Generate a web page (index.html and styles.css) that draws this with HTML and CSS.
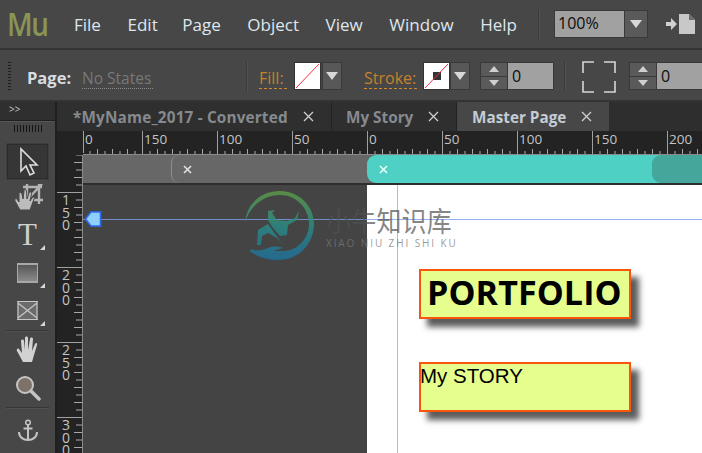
FILE: index.html
```html
<!DOCTYPE html>
<html lang="en">
<head>
<meta charset="utf-8">
<title>Muse</title>
<link rel="stylesheet" href="styles.css">
</head>
<body>
<div class="app">
  <header class="menubar">
    <div class="logo">Mu</div>
    <nav class="menu"><span>File</span><span>Edit</span><span class="menu-page">Page</span><span>Object</span><span>View</span><span>Window</span><span>Help</span></nav>
    <div class="vsep menu-sep"></div>
    <div class="zoom-combo"><div class="zoom-value">100%</div><div class="arrow-btn"><i class="tri"></i></div></div>
    <svg class="publish" width="30" height="20" viewBox="0 0 30 20"><path d="M0 8h5V4l6 6-6 6v-4H0z" fill="#d0d0d0"/><path d="M13 0h10l6 6v14H13z" fill="#c8c8c8"/><path d="M23 0v6h6z" fill="#6c6c6c"/></svg>
  </header>

  <section class="controlbar">
    <div class="grip"></div>
    <strong class="page-label">Page:</strong>
    <span class="states">No States</span>
    <div class="vsep ctl-sep1"></div>
    <span class="link fill-label">Fill:</span>
    <div class="swatch sw1"><svg width="25" height="26" viewBox="0 0 25 26"><path d="M1 25L24 1" stroke="#f0303a" stroke-width="1"/></svg></div>
    <div class="arrow-btn small ab1"><i class="tri"></i></div>
    <span class="link stroke-label">Stroke:</span>
    <div class="swatch sw2"><svg width="25" height="26" viewBox="0 0 25 26"><rect x="9" y="9" width="8" height="8" fill="#333"/><path d="M1 25L24 1" stroke="#f0303a" stroke-width="1"/></svg></div>
    <div class="arrow-btn small"><i class="tri"></i></div>
    <div class="spinner sp1"><div class="spin-btns"><div class="spin-up"><i class="tri-up"></i></div><div class="spin-down"><i class="tri-down"></i></div></div><div class="spin-val">0</div></div>
    <div class="vsep ctl-sep2"></div>
    <svg class="corners" width="36" height="34" viewBox="0 0 36 34"><path d="M13 2H2v11M23 2h11v11M2 21v11h11M34 21v11H23" fill="none" stroke="#d6d6d6" stroke-width="1.600"/></svg>
    <div class="spinner sp2"><div class="spin-btns"><div class="spin-up"><i class="tri-up"></i></div><div class="spin-down"><i class="tri-down"></i></div></div><div class="spin-val">0</div></div>
  </section>

  <main class="main">
    <aside class="left">
      <div class="collapse">&gt;&gt;</div>
      <div class="tools">
        <div class="tool-grip"></div>
        <div class="tool active"><svg width="24" height="30" viewBox="0 0 24 30"><path d="M5 2v22l5-5 4 9 4-2-4-8h7z" fill="none" stroke="#dedede" stroke-width="1.600"/></svg></div>
        <div class="tool crop"><svg width="30" height="28" viewBox="0 0 30 28"><path d="M10 3h19M14 0v16M12 16h18M26 0v20M29 0L13 17" fill="none" stroke="#b4b4b4" stroke-width="2.400"/><path d="M7 26L2 17C1 15 3 14 4 15L6 18 6 10C6 8 8 8 9 10L10 15 11 7C11 5 13 5 13.500 7L14 15 16 9C17 7 19 8 18.500 10L17 17 19 14C20 12 22 13 21 15L17 26Z" fill="#bcbcbc" stroke="#474747" stroke-width="1"/></svg></div>
        <div class="tool t-tool">T<i class="corner-mark"></i></div>
        <div class="tool"><div class="rect-icon"></div><i class="corner-mark"></i></div>
        <div class="tool"><svg width="22" height="20" viewBox="0 0 22 20"><rect x="0.500" y="1" width="20" height="17" fill="#6b6b6b"/><path d="M0 0.500h21M0 18.500h21M1 1v17M20 1v17M1 2l19 15M20 2L1 17" stroke="#c6c6c6" stroke-width="1.200" fill="none"/></svg><i class="corner-mark"></i></div>
        <div class="tool-rule r1"></div>
        <div class="tool"><svg width="26" height="28" viewBox="0 0 26 28"><path d="M8 26l-6-11c-1-2 1-3 2-2l3 4-1-12c0-2 3-2 3 0l1 9 0-12c0-2 3-2 3 0l0 12 2-11c0-2 3-2 3 0l-1 12 3-7c1-2 3-1 2 1l-3 10-2 7z" fill="#d2d2d2"/></svg></div>
        <div class="tool"><svg width="26" height="26" viewBox="0 0 26 26"><circle cx="10" cy="10" r="8" fill="#7d7268" stroke="#c4c4c4" stroke-width="2"/><path d="M16 16l8 8" stroke="#c4c4c4" stroke-width="3.500" stroke-linecap="round"/></svg></div>
        <div class="tool-rule r2"></div>
        <div class="tool"><svg width="22" height="24" viewBox="0 0 22 24"><circle cx="11" cy="3.500" r="2.300" fill="none" stroke="#c4c4c4" stroke-width="1.500"/><path d="M11 6v16M6.500 9.500h9M2 13c0 5 4 8 9 8s9-3 9-8" fill="none" stroke="#c4c4c4" stroke-width="2"/></svg></div>
      </div>
    </aside>

    <div class="doc">
      <div class="tabs">
        <div class="tab t1">*MyName_2017 - Converted<svg class="x" width="11" height="11" viewBox="0 0 11 11"><path d="M1 1l9 9M10 1l-9 9" stroke="#cfcfcf" stroke-width="1.300"/></svg></div>
        <div class="tab t2">My Story<svg class="x" width="11" height="11" viewBox="0 0 11 11"><path d="M1 1l9 9M10 1l-9 9" stroke="#cfcfcf" stroke-width="1.300"/></svg></div>
        <div class="tab t3">Master Page<svg class="x" width="11" height="11" viewBox="0 0 11 11"><path d="M1 1l9 9M10 1l-9 9" stroke="#cfcfcf" stroke-width="1.300"/></svg></div>
      </div>
      <div class="workspace">
        <div class="corner-cell"></div>
        <div class="hruler">
          <span class="mark first">0</span><span class="mark">150</span><span class="mark">100</span><span class="mark">50</span><span class="mark">0</span><span class="mark">50</span><span class="mark">100</span><span class="mark">150</span><span class="mark">200</span>
        </div>
        <div class="vruler">
          <div class="vmark lead"></div>
          <div class="vmark"><span>1</span><span>5</span><span>0</span></div>
          <div class="vmark"><span>2</span><span>0</span><span>0</span></div>
          <div class="vmark"><span>2</span><span>5</span><span>0</span></div>
          <div class="vmark"><span>3</span><span>0</span><span>0</span></div>
        </div>
        <div class="canvas">
          <div class="band">
            <div class="band-grey"><div class="band-notch"><svg class="bx" width="9" height="9" viewBox="0 0 9 9"><path d="M1 1l7 7M8 1L1 8" stroke="#e0e0e0" stroke-width="1.700"/></svg></div></div>
            <div class="band-teal"><svg class="bx" width="9" height="9" viewBox="0 0 9 9"><path d="M1 1l7 7M8 1L1 8" stroke="#e8fbf8" stroke-width="1.700"/></svg><div class="band-dark"></div></div>
          </div>
          <div class="stage">
            <div class="page"></div>
            <div class="guide-v"></div>
            <div class="guide-h"></div>
            <svg class="marker" width="18" height="18" viewBox="0 0 18 18"><path d="M1.500 9L7 2h9.500v14H7z" fill="#8fd0fb" stroke="#2f6bf0" stroke-width="1.600"/></svg>
            <div class="box box-a"><span class="portfolio">PORTFOLIO</span></div>
            <div class="box box-b"><span class="story">My STORY</span></div>
            <svg class="wm-logo" width="74" height="72" viewBox="0 0 74 72">
              <defs><linearGradient id="wg" gradientUnits="userSpaceOnUse" x1="0" y1="0" x2="0" y2="70"><stop offset="0" stop-color="#5c9a45"/><stop offset="0.500" stop-color="#2a8a86"/><stop offset="1" stop-color="#1f6f9c"/></linearGradient></defs>
              <path d="M2 32C3 13 18 0 37 0C56 0 71 15 71 33C71 53 55 69 36 69C25 69 14 66 7 60C6 59 8 58 10 59C15 60 20 59 25 57C30 55 36 55 40 57L30 60L40 60C54 60 66 48 66 33C66 17 53 4 37 4C20 4 6 16 2 32Z" fill="url(#wg)"/>
              <path d="M25 20L32 19L29 22L34 29L44 30L52 27L56 20L54 29L45 34L44 44L37 45L30 37L25 29Z" fill="url(#wg)"/>
              <path d="M14 54L15 39L25 33L30 40L35 47L39 52L34 47L25 42L19 45L18 54Z" fill="url(#wg)"/>
            </svg>
            <div class="wm-text"><div class="wm-cn">小牛知识库</div><div class="wm-en">XIAO NIU ZHI SHI KU</div></div>
          </div>
        </div>
      </div>
    </div>
  </main>
</div>
</body>
</html>
```
FILE: styles.css
```css
* { box-sizing: border-box; }
html, body { margin: 0; padding: 0; }
body { width: 702px; height: 453px; overflow: hidden; background: #474747; font-family: "Open Sans", "Noto Sans", sans-serif; }
.app { width: 702px; height: 453px; display: flex; flex-direction: column; overflow: hidden; }

.menubar { height: 48px; flex: none; display: flex; align-items: center; background: #474747; }
.logo { width: 74px; flex: none; padding-left: 7px; font-size: 32px; font-weight: 600; line-height: 44px; letter-spacing: -1.500px; color: #8a9454; transform: scaleX(0.87); transform-origin: 7px 0; }
.menu { width: 443px; flex: none; display: flex; justify-content: space-between; font-size: 17px; color: #dfe6ee; }
.menu-page { margin-left: -2px; }
.vsep { width: 2px; background: #393939; flex: none; border-right: 1px solid #525252; }
.menu-sep { height: 29px; margin-left: 21px; }
.zoom-combo { margin-left: 14px; width: 94px; height: 28px; padding: 1px; background: #393939; display: flex; gap: 1px; flex: none; }
.zoom-value { width: 69px; background: #a1a1a1; color: #0e0e0e; font-size: 16px; line-height: 25px; padding-left: 3px; }
.arrow-btn { width: 22px; background: #5a5a5a; display: flex; align-items: center; justify-content: center; flex: none; }
.tri { display: block; width: 0; height: 0; border-left: 6px solid transparent; border-right: 6px solid transparent; border-top: 8px solid #d8d8d8; }
.tri-up { display: block; width: 0; height: 0; border-left: 5px solid transparent; border-right: 5px solid transparent; border-bottom: 6px solid #cfcfcf; }
.tri-down { display: block; width: 0; height: 0; border-left: 5px solid transparent; border-right: 5px solid transparent; border-top: 6px solid #cfcfcf; }
.publish { margin-left: 18px; flex: none; margin-top: -1px; }

.controlbar { height: 54px; flex: none; display: flex; align-items: flex-start; border-top: 2px solid #353535; border-bottom: 2px solid #333; background: #474747; padding-top: 12px; overflow: hidden; }
.grip { width: 3px; flex: none; height: 30px; margin: 0 0 0 8px; background: repeating-linear-gradient(to bottom, #1e1e1e 0 1px, transparent 1px 3px); }
.page-label { flex: none; width: 55px; margin-left: 16px; font-size: 16.500px; line-height: 20px; margin-top: 6px; color: #d8dde2; }
.states { flex: none; width: 71px; font-size: 15.500px; line-height: 20px; margin-top: 6px; color: #787878; border-bottom: 1px dotted #8a8a8a; white-space: nowrap; }
.ctl-sep1 { height: 29px; margin-left: 93px; }
.link { flex: none; font-size: 16px; line-height: 20px; margin-top: 6px; color: #c6812c; border-bottom: 1px dashed #d68a28; white-space: nowrap; }
.fill-label { margin-left: 11px; width: 28px; }
.swatch { width: 27px; height: 28px; background: #fff; border: 1px solid #333; flex: none; }
.sw1 { margin-left: 7px; }
.sw2 { margin-left: 6px; }
.swatch svg { display: block; }
.arrow-btn.small { width: 20px; height: 28px; background: #585858; border: 1px solid #3a3a3a; }
.ab1 { margin-left: 1px; }
.stroke-label { margin-left: 22px; width: 53px; }
.spinner { display: flex; height: 28px; border: 1px solid #393939; flex: none; }
.sp1 { margin-left: 10px; width: 74px; }
.sp2 { margin-left: 12px; width: 80px; }
.spin-btns { width: 27px; flex: none; display: flex; flex-direction: column; background: #5a5a5a; border-right: 1px solid #393939; }
.spin-up, .spin-down { flex: 1; display: flex; align-items: center; justify-content: center; }
.spin-up { border-bottom: 1px solid #393939; }
.spin-val { flex: 1; background: #a1a1a1; color: #0e0e0e; font-size: 16px; line-height: 26px; padding-left: 4px; }
.ctl-sep2 { height: 29px; margin-left: 10px; }
.corners { margin: -2px 0 0 15px; flex: none; }

.main { flex: 1; display: flex; min-height: 0; }
.left { width: 57px; flex: none; background: #1f1f1f; display: flex; flex-direction: column; padding-right: 2px; }
.collapse { height: 18px; background: #2f2f2f; color: #c8c8c8; font-size: 10px; line-height: 15px; padding-left: 9px; flex: none; }
.tools { flex: 1; margin-top: 1px; background: #474747; border-top: 1px solid #565656; padding-top: 3px; display: flex; flex-direction: column; align-items: center; }
.tool-grip { width: 28px; height: 7px; flex: none; background: repeating-linear-gradient(to right, #151515 0 1px, transparent 1px 3px); margin-bottom: 12px; }
.tool { position: relative; width: 38px; flex: none; height: 38px; display: flex; align-items: center; justify-content: center; }
.tool svg { display: block; }
.tool.active { width: 41px; height: 35px; background: #363636; border: 1px solid #2c2c2c; outline: 1px solid #3e3e3e; }
.tool.crop { height: 37px; }
.t-tool { font-family: "Liberation Serif", serif; font-size: 31px; color: #cfcfcf; line-height: 38px; }
.rect-icon { width: 21px; height: 20px; background: linear-gradient(#565656, #8a8a8a); border: 1px solid #a8a8a8; border-width: 2px 1px; }
.corner-mark { position: absolute; right: 2px; bottom: 4px; width: 0; height: 0; border-left: 5px solid transparent; border-bottom: 5px solid #d8d8d8; }
.tool-rule { width: 43px; height: 2px; background: #363636; flex: none; border-bottom: 1px solid #505050; }
.r1 { margin-bottom: -1px; }
.r2 { margin-bottom: 3px; }

.doc { flex: 1; display: flex; flex-direction: column; min-width: 0; background: #232323; }
.tabs { height: 29px; flex: none; display: flex; background: #2e2e2e; padding-left: 1px; }
.tab { display: flex; align-items: center; font-weight: 700; font-size: 15.300px; color: #868a8e; background: #2f2f2f; border-right: 1px solid #222; position: relative; white-space: nowrap; }
.t1 { width: 274px; padding-left: 15px; letter-spacing: 0.170px; }
.t2 { width: 125px; padding-left: 14px; }
.t3 { width: 152px; padding-left: 15px; background: #474747; color: #c4ccd4; border-right: 0; }
.tab .x { position: absolute; top: 9px; }
.t1 .x { left: 245px; }
.t2 .x { left: 96px; }
.t3 .x { left: 124px; }

.workspace { flex: 1; display: grid; grid-template-columns: 26px 1fr; grid-template-rows: 24px 1fr; min-height: 0; background: #232323; }
.corner-cell { background: #232323; }
.hruler { display: flex; overflow: hidden; background-color: #232323; border-bottom: 1px solid #8a8a8a;
  background-image: linear-gradient(to right, #a8a8a8 1px, transparent 1px), linear-gradient(to right, #a8a8a8 1px, transparent 1px);
  background-size: 15px 5px, 15px 3px; background-position: 59px bottom, 66.500px bottom; background-repeat: repeat-x; }
.mark { flex: none; width: 75px; height: 22px; border-left: 1px solid #a0a0a0; padding-left: 1px; font-size: 13.500px; line-height: 16px; color: #c4c4c4; }
.mark.first { width: 59px; }
.vruler { display: flex; flex-direction: column; overflow: hidden; background-color: #232323; border-right: 1px solid #8a8a8a;
  background-image: linear-gradient(#a8a8a8 1px, transparent 1px), linear-gradient(#a8a8a8 1px, transparent 1px);
  background-size: 8px 15px, 6px 15px; background-position: right 7px, right 14.500px; background-repeat: repeat-y; }
.vmark { flex: none; height: 75px; border-top: 1px solid #a0a0a0; display: flex; flex-direction: column; padding-left: 5px; font-size: 14px; line-height: 12.500px; color: #c4c4c4; padding-top: 1px; }
.vmark.lead { height: 37px; border-top: 0; }
.canvas { display: flex; flex-direction: column; min-width: 0; min-height: 0; }
.band { height: 30px; flex: none; display: flex; background: #676767; border-bottom: 2px solid #2e2e2e; }
.band-grey { width: 284px; flex: none; padding-left: 88px; }
.band-notch { width: 40px; height: 28px; border-left: 1px solid #8e8e8e; border-radius: 8px 0 0 8px; padding-left: 11px; display: flex; align-items: center; }
.bx { display: block; flex: none; }
.band-teal { flex: 1; display: flex; align-items: center; justify-content: space-between; background: #4fd0c5; border-radius: 9px 0 0 9px; padding-left: 12px; }
.band-dark { width: 50px; height: 28px; background: #45a69b; border-radius: 9px 0 0 9px; }
.stage { flex: 1; position: relative; background: #444444; overflow: hidden; }
.page { position: absolute; left: 284px; top: 0; right: 0; bottom: 0; background: #fff; }
.guide-v { position: absolute; left: 314px; top: 0; bottom: 0; width: 1px; background: #9fc0ee; }
.guide-h { position: absolute; left: 0; right: 0; top: 34px; height: 1px; background: #7b9de8; opacity: 0.8; }
.marker { position: absolute; left: 1px; top: 25px; }
.box { position: absolute; left: 336px; width: 212px; height: 50px; background: #e6fe8d; border: 2px solid #f8560c; box-shadow: 8px 8px 6px #5c5c5c; color: #000; }
.box-a { top: 84px; }
.box-b { top: 177px; }
.portfolio { display: block; font-weight: 700; font-size: 34px; line-height: 42px; padding-left: 6px; letter-spacing: 0.100px; }
.story { display: block; font-family: "Liberation Sans", sans-serif; font-size: 20.500px; line-height: 23px; margin-left: -1px; }
.wm-logo { position: absolute; left: 160px; top: 6px; opacity: 0.85; }
.wm-text { position: absolute; left: 243px; top: 18px; color: rgba(80, 80, 80, 0.7); }
.wm-cn { font-family: "Noto Sans CJK SC", sans-serif; font-size: 25px; line-height: 30px; letter-spacing: 0.200px; transform: scaleY(1.12); transform-origin: 0 0; }
.wm-en { font-size: 10px; line-height: 14px; letter-spacing: 1.900px; margin-top: 3px; color: rgba(120, 120, 120, 0.75); white-space: nowrap; }
```
